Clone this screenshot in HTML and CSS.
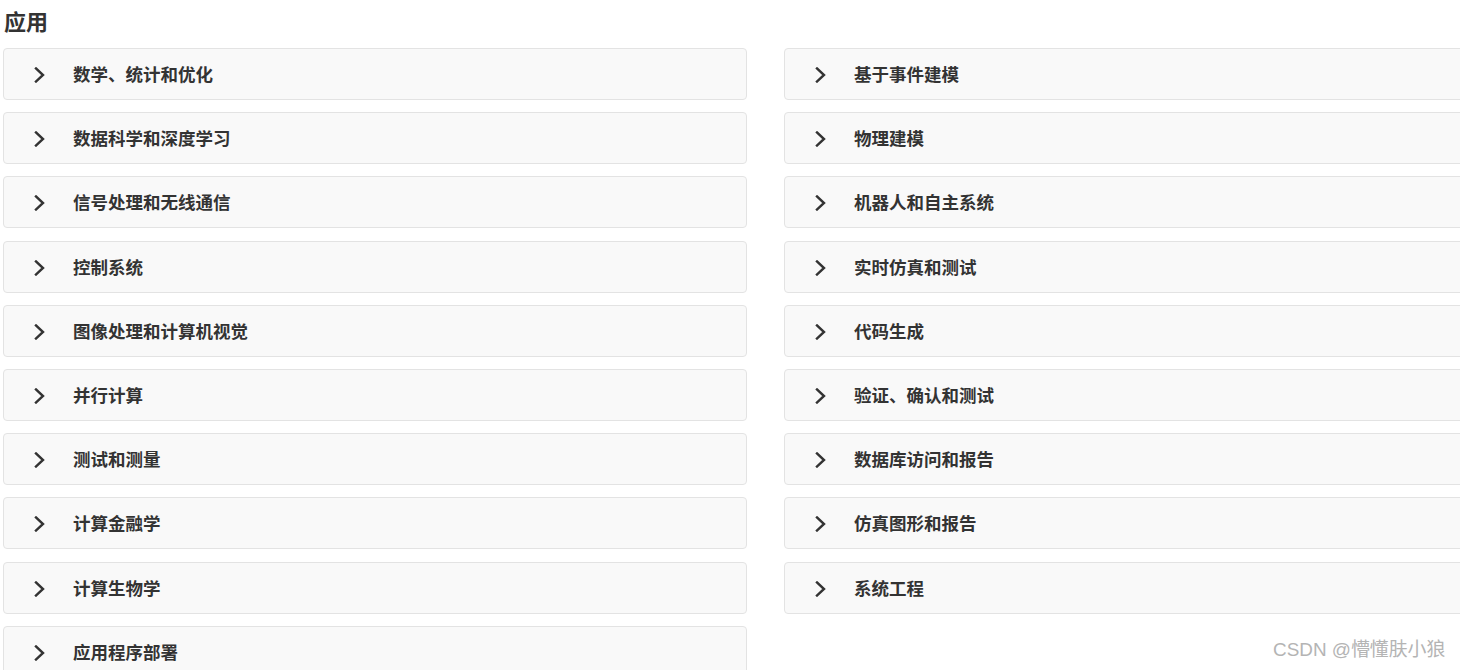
FILE: index.html
```html
<!DOCTYPE html>
<html lang="zh">
<head>
<meta charset="utf-8">
<title>应用</title>
<link rel="stylesheet" href="styles.css">
</head>
<body>
<div class="page">
  <div class="header">
    <h2 class="title">应用</h2>
    <a class="expand" href="#">全部展开</a>
  </div>
  <div class="grid">
    <div class="item"><svg class="chev" viewBox="0 0 14 16"><path d="M3 1.5 L10 8 L3 14.5"/></svg><span>数学、统计和优化</span></div>
    <div class="item"><svg class="chev" viewBox="0 0 14 16"><path d="M3 1.5 L10 8 L3 14.5"/></svg><span>基于事件建模</span></div>
    <div class="item"><svg class="chev" viewBox="0 0 14 16"><path d="M3 1.5 L10 8 L3 14.5"/></svg><span>数据科学和深度学习</span></div>
    <div class="item"><svg class="chev" viewBox="0 0 14 16"><path d="M3 1.5 L10 8 L3 14.5"/></svg><span>物理建模</span></div>
    <div class="item"><svg class="chev" viewBox="0 0 14 16"><path d="M3 1.5 L10 8 L3 14.5"/></svg><span>信号处理和无线通信</span></div>
    <div class="item"><svg class="chev" viewBox="0 0 14 16"><path d="M3 1.5 L10 8 L3 14.5"/></svg><span>机器人和自主系统</span></div>
    <div class="item"><svg class="chev" viewBox="0 0 14 16"><path d="M3 1.5 L10 8 L3 14.5"/></svg><span>控制系统</span></div>
    <div class="item"><svg class="chev" viewBox="0 0 14 16"><path d="M3 1.5 L10 8 L3 14.5"/></svg><span>实时仿真和测试</span></div>
    <div class="item"><svg class="chev" viewBox="0 0 14 16"><path d="M3 1.5 L10 8 L3 14.5"/></svg><span>图像处理和计算机视觉</span></div>
    <div class="item"><svg class="chev" viewBox="0 0 14 16"><path d="M3 1.5 L10 8 L3 14.5"/></svg><span>代码生成</span></div>
    <div class="item"><svg class="chev" viewBox="0 0 14 16"><path d="M3 1.5 L10 8 L3 14.5"/></svg><span>并行计算</span></div>
    <div class="item"><svg class="chev" viewBox="0 0 14 16"><path d="M3 1.5 L10 8 L3 14.5"/></svg><span>验证、确认和测试</span></div>
    <div class="item"><svg class="chev" viewBox="0 0 14 16"><path d="M3 1.5 L10 8 L3 14.5"/></svg><span>测试和测量</span></div>
    <div class="item"><svg class="chev" viewBox="0 0 14 16"><path d="M3 1.5 L10 8 L3 14.5"/></svg><span>数据库访问和报告</span></div>
    <div class="item"><svg class="chev" viewBox="0 0 14 16"><path d="M3 1.5 L10 8 L3 14.5"/></svg><span>计算金融学</span></div>
    <div class="item"><svg class="chev" viewBox="0 0 14 16"><path d="M3 1.5 L10 8 L3 14.5"/></svg><span>仿真图形和报告</span></div>
    <div class="item"><svg class="chev" viewBox="0 0 14 16"><path d="M3 1.5 L10 8 L3 14.5"/></svg><span>计算生物学</span></div>
    <div class="item"><svg class="chev" viewBox="0 0 14 16"><path d="M3 1.5 L10 8 L3 14.5"/></svg><span>系统工程</span></div>
    <div class="item"><svg class="chev" viewBox="0 0 14 16"><path d="M3 1.5 L10 8 L3 14.5"/></svg><span>应用程序部署</span></div>
  </div>
</div>
<div class="watermark">CSDN @懵懂肤小狼</div>
</body>
</html>
```
FILE: styles.css
```css
html, body {
  margin: 0;
  padding: 0;
  overflow: hidden;
  background: #ffffff;
  width: 1460px;
  height: 670px;
}
body {
  font-family: "Noto Sans CJK SC", "Noto Sans", "Liberation Sans", sans-serif;
  color: #333333;
  position: relative;
}
.page {
  width: 1526px;
  padding: 0 0 0 3px;
}
.header {
  display: flex;
  justify-content: space-between;
  align-items: flex-start;
  height: 48px;
}
.title {
  margin: 0;
  padding: 4px 0 0 1px;
  font-size: 22px;
  line-height: 32px;
  font-weight: 700;
  color: #333333;
}
.expand {
  font-size: 13px;
  line-height: 16px;
  margin-top: 8px;
  color: #0076a8;
  text-decoration: none;
}
.grid {
  display: grid;
  grid-template-columns: 744px 744px;
  column-gap: 37px;
  row-gap: 12.2px;
}
.item {
  box-sizing: border-box;
  height: 52px;
  border: 1px solid #e3e3e3;
  border-radius: 4px;
  background: #f9f9f9;
  display: flex;
  align-items: center;
  padding-left: 29px;
  font-size: 17.5px;
  font-weight: 700;
  color: #333333;
}
.item span {
  margin-top: -1px;
}
.chev {
  width: 14px;
  height: 16px;
  margin-top: 2px;
  margin-right: 26px;
  fill: none;
  stroke: #333333;
  stroke-width: 2.4;
  stroke-linecap: square;
  stroke-linejoin: miter;
}
.watermark {
  position: absolute;
  left: 1273px;
  top: 637px;
  font-size: 18.9px;
  line-height: 26px;
  color: #b4b4b4;
  font-family: "Liberation Sans", "Noto Sans CJK SC", sans-serif;
  white-space: nowrap;
}
```
